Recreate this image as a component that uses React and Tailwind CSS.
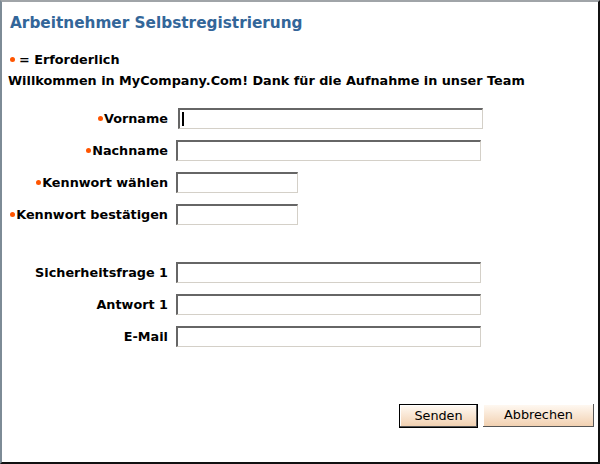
const fields = [
  { label: "Vorname", required: true, width: "w-[305px]", focused: true },
  { label: "Nachname", required: true, width: "w-[305px]" },
  { label: "Kennwort wählen", required: true, width: "w-[122px]" },
  { label: "Kennwort bestätigen", required: true, width: "w-[122px]" },
];

const extraFields = [
  { label: "Sicherheitsfrage 1", width: "w-[305px]" },
  { label: "Antwort 1", width: "w-[305px]" },
  { label: "E-Mail", width: "w-[305px]" },
];

function Bullet() {
  return <span className="mr-[1px] inline-block h-[5px] w-[5px] rounded-full bg-[#ff5500] align-middle" />;
}

function Field({ label, required, width, focused }) {
  return (
    <div className="flex h-[32px] items-center">
      <div className="w-[166px] text-right">
        {required && <Bullet />}
        <span className="align-middle">{label}</span>
      </div>
      <div className={focused ? "ml-[10px]" : "ml-[8px]"}>
        <div
          className={`relative h-[21px] ${width} border-t-2 border-l-2 border-r border-b border-t-[#666] border-l-[#666] border-r-[#d4d0c8] border-b-[#d4d0c8] bg-white`}
        >
          {focused && <span className="absolute left-[2px] top-[2px] h-[14px] w-[2px] bg-black" />}
        </div>
      </div>
    </div>
  );
}

export default function App() {
  return (
    <div
      className="h-[464px] w-[600px] border-t-2 border-l-2 border-r-2 border-b-2 border-t-[#a0a4a8] border-l-[#7d8b96] border-r-[#111] border-b-[#111] bg-white text-[12.8px] font-bold text-black"
      style={{ fontFamily: "'DejaVu Sans', Verdana, sans-serif" }}
    >
      <h1 className="ml-[8px] mt-[11px] text-[15.3px] leading-[20px] text-[#336699]">Arbeitnehmer Selbstregistrierung</h1>

      <p className="ml-[8px] mt-[17px] leading-[18px]">
        <Bullet />
        <span className="ml-[3px] align-middle">= Erforderlich</span>
      </p>
      <p className="ml-[6px] mt-[3px] leading-[18px]">Willkommen in MyCompany.Com! Dank für die Aufnahme in unser Team</p>

      <div className="mt-[13px]">
        {fields.map((f) => (
          <Field key={f.label} {...f} />
        ))}
      </div>

      <div className="mt-[26px]">
        {extraFields.map((f) => (
          <Field key={f.label} {...f} />
        ))}
      </div>

      <div className="mr-[4px] mt-[51px] flex justify-end gap-[5px] font-normal">
        <button
          type="button"
          className="h-[24px] w-[79px] border border-black bg-gradient-to-b from-[#fffaf4] to-[#f1cfae] shadow-[inset_-1px_-1px_0_#555,inset_1px_1px_0_#fff]"
        >
          Senden
        </button>
        <button
          type="button"
          className="h-[23px] w-[111px] bg-gradient-to-b from-[#fffaf4] to-[#f1cfae] shadow-[inset_-1px_-1px_0_#555,inset_1px_1px_0_#fff]"
        >
          Abbrechen
        </button>
      </div>
    </div>
  );
}
